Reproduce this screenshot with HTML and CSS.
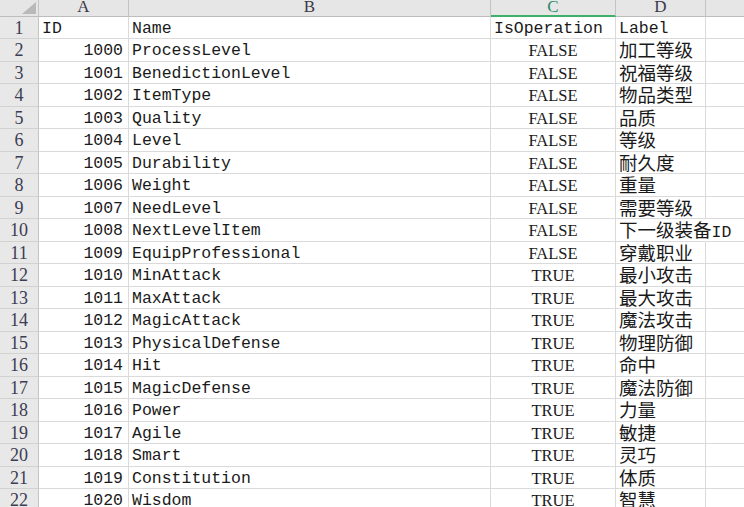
FILE: index.html
```html
<!DOCTYPE html>
<html>
<head>
<meta charset="utf-8">
<link rel="stylesheet" href="styles.css">
</head>
<body>
<div class="sheet">
  <div class="hd corner"><svg width="14" height="12" viewBox="0 0 14 12"><polygon points="14,0 14,12 0,12" fill="#b9b9b9"/></svg></div>
  <div class="hd col">A</div>
  <div class="hd col">B</div>
  <div class="hd col sel">C</div>
  <div class="hd col">D</div>
  <div class="hd col last"></div>

  <div class="rn">1</div><div class="c">ID</div><div class="c">Name</div><div class="c">IsOperation</div><div class="c">Label</div><div class="c e"></div>
  <div class="rn">2</div><div class="c n">1000</div><div class="c">ProcessLevel</div><div class="c b">FALSE</div><div class="c"><span class="cjk">加工等级</span></div><div class="c e"></div>
  <div class="rn">3</div><div class="c n">1001</div><div class="c">BenedictionLevel</div><div class="c b">FALSE</div><div class="c"><span class="cjk">祝福等级</span></div><div class="c e"></div>
  <div class="rn">4</div><div class="c n">1002</div><div class="c">ItemType</div><div class="c b">FALSE</div><div class="c"><span class="cjk">物品类型</span></div><div class="c e"></div>
  <div class="rn">5</div><div class="c n">1003</div><div class="c">Quality</div><div class="c b">FALSE</div><div class="c"><span class="cjk">品质</span></div><div class="c e"></div>
  <div class="rn">6</div><div class="c n">1004</div><div class="c">Level</div><div class="c b">FALSE</div><div class="c"><span class="cjk">等级</span></div><div class="c e"></div>
  <div class="rn">7</div><div class="c n">1005</div><div class="c">Durability</div><div class="c b">FALSE</div><div class="c"><span class="cjk">耐久度</span></div><div class="c e"></div>
  <div class="rn">8</div><div class="c n">1006</div><div class="c">Weight</div><div class="c b">FALSE</div><div class="c"><span class="cjk">重量</span></div><div class="c e"></div>
  <div class="rn">9</div><div class="c n">1007</div><div class="c">NeedLevel</div><div class="c b">FALSE</div><div class="c"><span class="cjk">需要等级</span></div><div class="c e"></div>
  <div class="rn">10</div><div class="c n">1008</div><div class="c">NextLevelItem</div><div class="c b">FALSE</div><div class="c spill"><span class="cjk">下一级装备</span>ID</div><div class="c e"></div>
  <div class="rn">11</div><div class="c n">1009</div><div class="c">EquipProfessional</div><div class="c b">FALSE</div><div class="c"><span class="cjk">穿戴职业</span></div><div class="c e"></div>
  <div class="rn">12</div><div class="c n">1010</div><div class="c">MinAttack</div><div class="c b">TRUE</div><div class="c"><span class="cjk">最小攻击</span></div><div class="c e"></div>
  <div class="rn">13</div><div class="c n">1011</div><div class="c">MaxAttack</div><div class="c b">TRUE</div><div class="c"><span class="cjk">最大攻击</span></div><div class="c e"></div>
  <div class="rn">14</div><div class="c n">1012</div><div class="c">MagicAttack</div><div class="c b">TRUE</div><div class="c"><span class="cjk">魔法攻击</span></div><div class="c e"></div>
  <div class="rn">15</div><div class="c n">1013</div><div class="c">PhysicalDefense</div><div class="c b">TRUE</div><div class="c"><span class="cjk">物理防御</span></div><div class="c e"></div>
  <div class="rn">16</div><div class="c n">1014</div><div class="c">Hit</div><div class="c b">TRUE</div><div class="c"><span class="cjk">命中</span></div><div class="c e"></div>
  <div class="rn">17</div><div class="c n">1015</div><div class="c">MagicDefense</div><div class="c b">TRUE</div><div class="c"><span class="cjk">魔法防御</span></div><div class="c e"></div>
  <div class="rn">18</div><div class="c n">1016</div><div class="c">Power</div><div class="c b">TRUE</div><div class="c"><span class="cjk">力量</span></div><div class="c e"></div>
  <div class="rn">19</div><div class="c n">1017</div><div class="c">Agile</div><div class="c b">TRUE</div><div class="c"><span class="cjk">敏捷</span></div><div class="c e"></div>
  <div class="rn">20</div><div class="c n">1018</div><div class="c">Smart</div><div class="c b">TRUE</div><div class="c"><span class="cjk">灵巧</span></div><div class="c e"></div>
  <div class="rn">21</div><div class="c n">1019</div><div class="c">Constitution</div><div class="c b">TRUE</div><div class="c"><span class="cjk">体质</span></div><div class="c e"></div>
  <div class="rn">22</div><div class="c n">1020</div><div class="c">Wisdom</div><div class="c b">TRUE</div><div class="c"><span class="cjk">智慧</span></div><div class="c e"></div>
</div>
</body>
</html>
```

FILE: styles.css
```css
html, body {
  margin: 0;
  padding: 0;
  background: #ffffff;
}
body {
  width: 744px;
  height: 507px;
  overflow: hidden;
}
.sheet {
  display: grid;
  grid-template-columns: 39px 90px 362px 125px 90px 1fr;
  grid-template-rows: 16.5px repeat(22, 22.5px);
  background: #ffffff;
  font-family: "Liberation Mono", "Noto Sans CJK SC", monospace;
  font-size: 16.5px;
  color: #1a1a1a;
}
.hd {
  box-sizing: border-box;
  background: #e6e6e6;
  border-right: 1px solid #c4c4c4;
  border-bottom: 1px solid #bdbdbd;
  font-family: "Liberation Serif", serif;
  font-size: 17px;
  line-height: 14px;
  color: #3a3a48;
  text-align: center;
}
.corner {
  display: flex;
  justify-content: flex-end;
  align-items: flex-end;
  padding: 0 2px 2px 0;
}
.corner svg {
  display: block;
}
.hd.sel {
  color: #2a8a6a;
  border-bottom: 2px solid #3fb06a;
}
.hd.last {
  border-right: none;
}
.rn {
  box-sizing: border-box;
  background: #e8e8e8;
  border-right: 1px solid #c4c4c4;
  border-bottom: 1px solid #d2d2d2;
  font-family: "Liberation Serif", serif;
  font-size: 18px;
  line-height: 22px;
  color: #3c3c52;
  text-align: center;
}
.c {
  box-sizing: border-box;
  border-right: 1px solid #dadada;
  border-bottom: 1px solid #dadada;
  padding: 1px 3px 0 3px;
  line-height: 21px;
  white-space: nowrap;
  overflow: visible;
}
.c.e {
  border-right: none;
}
.c.n {
  text-align: right;
  padding-right: 5px;
}
.c.b {
  text-align: center;
  font-family: "Liberation Serif", serif;
  font-size: 16.5px;
}
.c.spill {
  border-right-color: transparent;
}
.cjk {
  font-family: "Noto Sans CJK SC", sans-serif;
  font-size: 18.5px;
  line-height: 18px;
}
```
